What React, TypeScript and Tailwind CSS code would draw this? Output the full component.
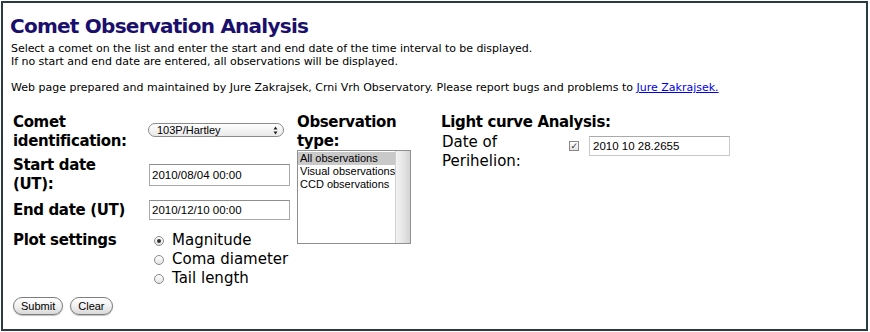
import { useState } from "react";

const FONT = { fontFamily: '"DejaVu Sans", Verdana, sans-serif' };
const UI_FONT = { fontFamily: '"Liberation Sans", Arial, sans-serif' };

const OBS_TYPES = ["All observations", "Visual observations", "CCD observations"];
const PLOT = ["Magnitude", "Coma diameter", "Tail length"];

function Radio({ on }: { on: boolean }) {
  return (
    <span className="w-[10px] h-[10px] rounded-full border border-[#8a8a8a] bg-gradient-to-b from-white to-[#e4e4e4] flex items-center justify-center shrink-0">
      {on && <span className="w-[4px] h-[4px] rounded-full bg-[#333]" />}
    </span>
  );
}

function MacButton({ children }: { children: React.ReactNode }) {
  return (
    <button
      style={UI_FONT}
      className="h-[18px] px-[7px] rounded-full border border-[#7d7d7d] bg-gradient-to-b from-white via-[#f1f1f1] to-[#d9d9d9] text-[11px] leading-none text-black shadow-[0_1px_1px_rgba(0,0,0,0.25)]"
    >
      {children}
    </button>
  );
}

export default function App() {
  const [plot, setPlot] = useState(0);
  const [obs, setObs] = useState(0);

  return (
    <div style={FONT} className="w-[870px] h-[332px] bg-white pt-[1px] pl-[1px]">
      <div className="w-[867px] h-[330px] border-2 border-[#2b3b42] pl-[7px] pt-[9px] text-black">
        <h1 className="text-[20px] leading-[28px] font-bold text-[#1b0f6e] tracking-[-0.75px]">Comet Observation Analysis</h1>
        <div className="pl-[1px]">
          <p className="text-[11px] leading-[13px] mt-[2px] tracking-[-0.05px]">
            Select a comet on the list and enter the start and end date of the time interval to be displayed.
            <br />
            If no start and end date are entered, all observations will be displayed.
          </p>
          <p className="text-[11px] leading-[13px] mt-[13px]">
            Web page prepared and maintained by Jure Zakrajsek, Crni Vrh Observatory. Please report bugs and problems to{" "}
            <a href="#" className="text-[#0000ee] underline">Jure Zakrajsek.</a>
          </p>

          <div className="flex mt-[19px] pl-[2px] text-[15px] leading-[19px] tracking-[-0.35px]">
            <div className="w-[284px] flex flex-col">
              <div className="flex h-[43px]">
                <div className="w-[135px] font-bold">Comet<br />identification:</div>
                <div className="pt-[10px]">
                  <div
                    style={UI_FONT}
                    className="w-[136px] h-[14px] rounded-full border border-[#8b8b8b] bg-gradient-to-b from-white to-[#e9e9e9] flex items-center pl-[8px] pr-[5px] text-[11px] leading-none tracking-normal"
                  >
                    <span className="flex-1">103P/Hartley</span>
                    <svg width="5" height="9" viewBox="0 0 5 9">
                      <path d="M2.5 0.5 L4.5 3.5 L0.5 3.5 Z M2.5 8.5 L4.5 5.5 L0.5 5.5 Z" fill="#222" />
                    </svg>
                  </div>
                </div>
              </div>
              <div className="flex h-[45px]">
                <div className="w-[136px] font-bold">Start date<br />(UT):</div>
                <div className="pt-[8px]">
                  <input
                    style={UI_FONT}
                    defaultValue="2010/08/04 00:00"
                    className="w-[141px] h-[22px] border border-[#a9a9a9] border-t-[#8e8e8e] px-[2px] text-[11.5px] tracking-normal outline-none"
                  />
                </div>
              </div>
              <div className="flex h-[29px]">
                <div className="w-[136px] font-bold">End date (UT)</div>
                <div className="mt-[-1px]">
                  <input
                    style={UI_FONT}
                    defaultValue="2010/12/10 00:00"
                    className="w-[141px] h-[20px] border border-[#a9a9a9] border-t-[#8e8e8e] px-[2px] text-[11.5px] tracking-normal outline-none"
                  />
                </div>
              </div>
              <div className="flex pt-[1px]">
                <div className="w-[141px] font-bold">Plot settings</div>
                <div className="flex flex-col tracking-normal">
                  {PLOT.map((p, i) => (
                    <label key={p} onClick={() => setPlot(i)} className="flex items-center gap-[8px] h-[19px] cursor-default">
                      <Radio on={plot === i} />
                      {p}
                    </label>
                  ))}
                </div>
              </div>
            </div>

            <div className="w-[144px] flex flex-col">
              <div className="font-bold">Observation<br />type:</div>
              <div className="w-[114px] h-[94px] border border-[#8f8f8f] flex mt-[-1px] tracking-normal">
                <div style={UI_FONT} className="flex-1 min-w-0 flex flex-col text-[11px] leading-[13px] pt-[1px] overflow-hidden">
                  {OBS_TYPES.map((o, i) => (
                    <div
                      key={o}
                      onClick={() => setObs(i)}
                      className={`pl-[2px] whitespace-nowrap ${obs === i ? "bg-[#c9c9c9]" : ""}`}
                    >
                      {o}
                    </div>
                  ))}
                </div>
                <div className="w-[15px] shrink-0 bg-gradient-to-r from-[#f3f3f3] via-[#e6e6e6] to-[#d4d4d4] border-l border-[#d0d0d0]" />
              </div>
            </div>

            <div className="flex flex-col">
              <div className="font-bold">Light curve Analysis:</div>
              <div className="flex mt-[1px] pl-[1px]">
                <div className="w-[127px] tracking-normal">Date of<br />Perihelion:</div>
                <div className="flex items-center h-[20px] mt-[3px]">
                  <span className="w-[10px] h-[10px] border border-[#888] bg-gradient-to-b from-white to-[#e4e4e4] flex items-center justify-center text-[9px] leading-none text-[#333]">✓</span>
                  <input
                    style={UI_FONT}
                    defaultValue="2010 10 28.2655"
                    className="ml-[10px] w-[141px] h-[20px] border border-[#c9c9c9] border-t-[#aaa] px-[3px] text-[11.5px] tracking-normal outline-none"
                  />
                </div>
              </div>
            </div>
          </div>

          <div className="flex gap-[7px] mt-[9px] pl-[2px]">
            <MacButton>Submit</MacButton>
            <MacButton>Clear</MacButton>
          </div>
        </div>
      </div>
    </div>
  );
}
